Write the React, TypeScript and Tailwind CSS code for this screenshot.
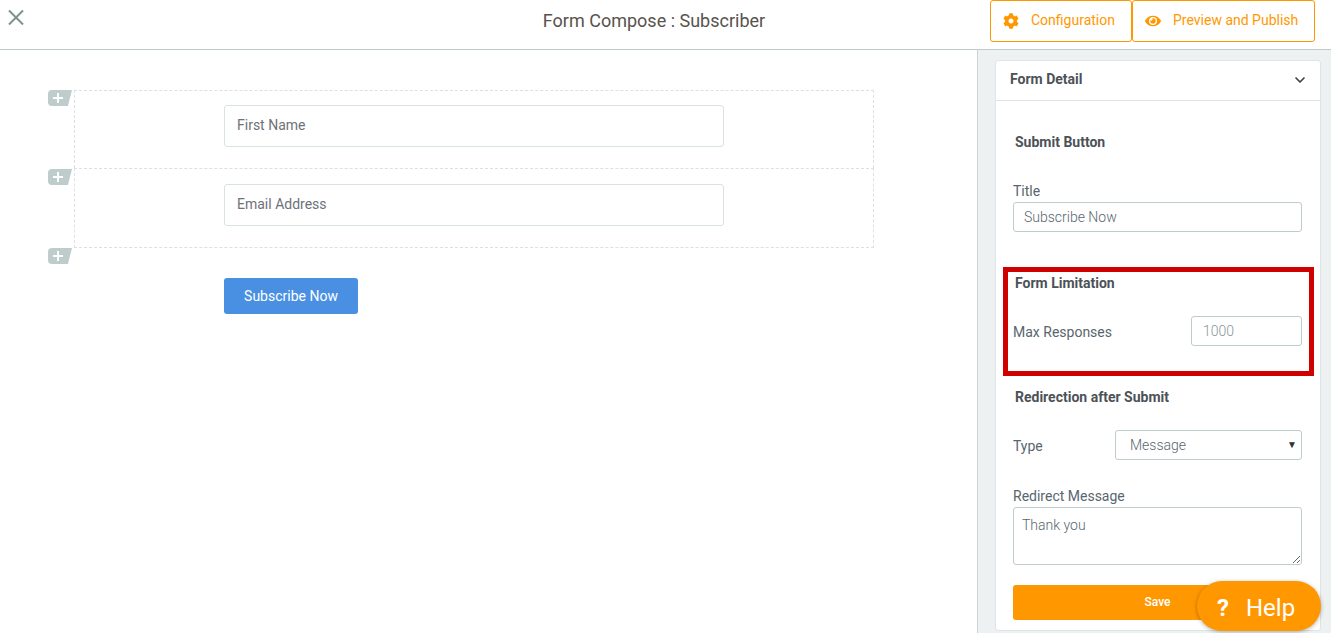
import { ChevronDown } from 'lucide-react';
import { FaCog, FaEye } from 'react-icons/fa';

function AddTab() {
  return (
    <div className="flex h-4 w-6 items-center [clip-path:polygon(0_0,100%_0,83%_100%,0_100%)] rounded-l-sm bg-[#bfcccc] pl-[5px]">
      <svg width="10" height="10" viewBox="0 0 10 10">
        <path d="M5 0v10M0 5h10" stroke="#fff" strokeWidth="2" />
      </svg>
    </div>
  );
}

function FieldRow({ label, last }: { label: string; last?: boolean }) {
  return (
    <div className={`relative flex justify-center border-t border-l border-r border-dashed border-[#d9e1e1] ${last ? 'h-20 border-b pt-[15px]' : 'h-[78px] pt-[14px]'}`}>
      <div className={`absolute -left-[27px] ${last ? 'top-0' : '-top-px'}`}>
        <AddTab />
      </div>
      <div className="flex h-[42px] w-[500px] items-center rounded-[3px] border border-[#dae3e3] px-3 pb-[2px] text-sm text-[#6d7278]">
        {label}
      </div>
      {last && (
        <div className="absolute -left-[27px] top-[79px]">
          <AddTab />
        </div>
      )}
    </div>
  );
}

export default function App() {
  return (
    <div className="flex h-[633px] flex-col overflow-hidden bg-white font-['Roboto',sans-serif] text-[#58666e]">
      <header className="flex h-[50px] shrink-0 items-start justify-between border-b border-[#bfcbcb]">
        <svg className="ml-2 mt-[9px]" width="16" height="16" viewBox="0 0 16 16">
          <path d="M1 1.5l14 14M15 1.5l-14 14" stroke="#7f9090" strokeWidth="2" fill="none" />
        </svg>
        <h1 className="ml-[294px] mt-[7px] text-lg text-[#58534d]">Form Compose : Subscriber</h1>
        <div className="mr-4 flex">
          <button className="flex h-[42px] w-[142px] items-center rounded-[3px] border border-[#ff9800] pb-[2px] pl-3 text-sm text-[#ff9800]">
            <FaCog className="mr-3 mt-[2px] h-4 w-4" />
            Configuration
          </button>
          <button className="flex h-[42px] w-[183px] items-center rounded-[3px] border border-[#ff9800] pb-[2px] pl-3 text-sm text-[#ff9800]">
            <FaEye className="mr-3 mt-[2px] h-4 w-4" />
            Preview and Publish
          </button>
        </div>
      </header>

      <div className="flex min-h-0 flex-1">
        <main className="flex-1 pl-[74px] pt-10">
          <div className="w-[800px]">
            <FieldRow label="First Name" />
            <FieldRow label="Email Address" last />
          </div>
          <button className="ml-[150px] mt-[30px] h-9 w-[134px] rounded-[3px] bg-[#4a90e2] text-sm text-white">
            Subscribe Now
          </button>
        </main>

        <aside className="w-[354px] shrink-0 border-l border-[#c9d3d3] bg-[#edf1f2] pl-[17px] pt-[10px]">
          <div className="h-[571px] w-[326px] rounded-[3px] border border-[#dee5e7] bg-white">
            <div className="flex h-10 items-center justify-between border-b border-[#dee5e7] pb-1 pl-[14px] pr-3">
              <span className="text-sm font-bold text-[#4c5257]">Form Detail</span>
              <ChevronDown className="mt-[2px] h-4 w-4 text-[#39424a]" strokeWidth={2.5} />
            </div>

            <div className="pl-[7px]">
              <h3 className="ml-3 mt-[33px] text-sm leading-[17px] font-bold text-[#4c5257]">Submit Button</h3>
              <label className="ml-[10px] mt-[32px] block text-sm leading-[17px]">Title</label>
              <div className="ml-[10px] mt-[2px] flex h-[30px] w-[289px] items-center rounded-[3px] border border-[#bfcccc] px-[10px] text-sm font-light text-[#58666e]">
                Subscribe Now
              </div>

              <section className="mt-[35px] h-[109px] w-[311px] border-[5px] border-[#d00000] pl-[5px]">
                <h3 className="ml-[2px] mt-[3px] text-sm leading-[17px] font-bold text-[#4c5257]">Form Limitation</h3>
                <div className="mt-6 flex items-center justify-between pr-[7px]">
                  <label className="mt-[2px] text-sm">Max Responses</label>
                  <div className="flex h-[30px] w-[111px] items-center rounded-[3px] border border-[#bfcccc] px-[11px] text-sm font-light text-[#8b959a]">
                    1000
                  </div>
                </div>
              </section>

              <h3 className="ml-3 mt-[13px] text-sm leading-[17px] font-bold text-[#4c5257]">Redirection after Submit</h3>
              <div className="ml-[10px] mt-6 flex w-[289px] items-center justify-between">
                <label className="mt-[2px] text-sm">Type</label>
                <div className="flex h-[30px] w-[187px] items-center justify-between rounded-[3px] border border-[#bfcccc] pl-[14px] pr-1 text-sm font-light text-[#58666e]">
                  Message
                  <span className="text-[10px] text-[#333]">▼</span>
                </div>
              </div>
              <label className="ml-[10px] mt-[28px] block text-sm leading-[17px]">Redirect Message</label>
              <textarea
                readOnly
                defaultValue="Thank you"
                className="ml-[10px] mt-[2px] block h-[58px] w-[289px] rounded-[3px] border border-[#bfcccc] px-2 py-[7px] text-sm leading-[20px] font-light text-[#58666e] outline-none"
              />
              <button className="ml-[10px] mt-5 h-[35px] w-[289px] rounded-[3px] bg-[#ff9800] pb-[2px] text-xs font-medium text-white">
                Save
              </button>
            </div>
          </div>
        </aside>
      </div>

      {/* floating help widget */}
      <div className="absolute left-[1197px] top-[581px] flex h-[50px] w-[124px] items-center rounded-[25px] bg-[#ff9800] pl-5 pt-1 text-white shadow-[0_1px_4px_rgba(0,0,0,0.3)]">
        <span className="mr-[17px] text-2xl font-bold">?</span>
        <span className="text-2xl">Help</span>
      </div>
    </div>
  );
}
